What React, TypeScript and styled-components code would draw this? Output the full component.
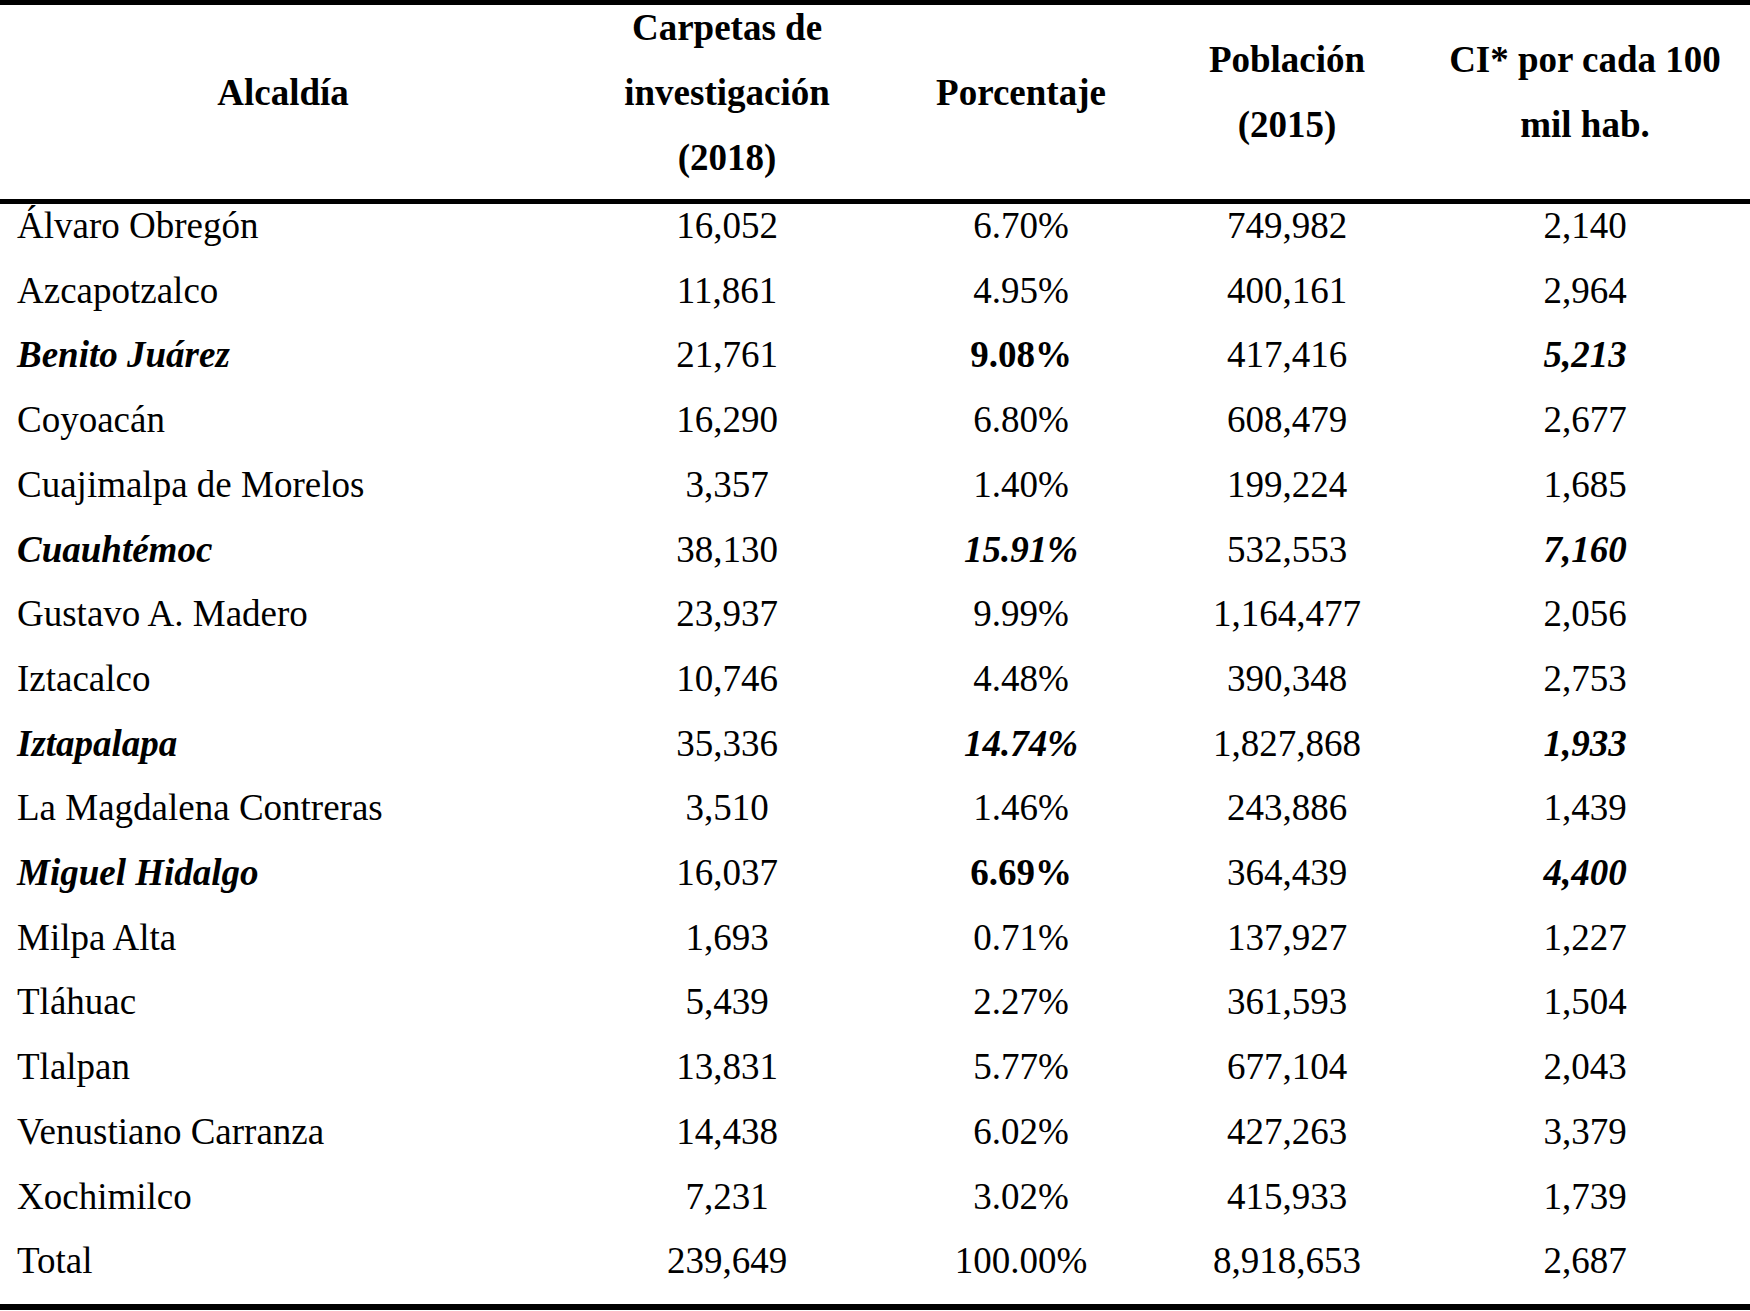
import { FunctionComponent } from "react";
import styled, { createGlobalStyle } from "styled-components";

type Emphasis = "plain" | "bold" | "boldItalic";

type RowData = {
  name: string;
  carpetas: string;
  pct: string;
  poblacion: string;
  ci: string;
  nameEm?: Emphasis;
  pctEm?: Emphasis;
  ciEm?: Emphasis;
};

const rows: RowData[] = [
  { name: "Álvaro Obregón", carpetas: "16,052", pct: "6.70%", poblacion: "749,982", ci: "2,140" },
  { name: "Azcapotzalco", carpetas: "11,861", pct: "4.95%", poblacion: "400,161", ci: "2,964" },
  { name: "Benito Juárez", carpetas: "21,761", pct: "9.08%", poblacion: "417,416", ci: "5,213", nameEm: "boldItalic", pctEm: "bold", ciEm: "boldItalic" },
  { name: "Coyoacán", carpetas: "16,290", pct: "6.80%", poblacion: "608,479", ci: "2,677" },
  { name: "Cuajimalpa de Morelos", carpetas: "3,357", pct: "1.40%", poblacion: "199,224", ci: "1,685" },
  { name: "Cuauhtémoc", carpetas: "38,130", pct: "15.91%", poblacion: "532,553", ci: "7,160", nameEm: "boldItalic", pctEm: "boldItalic", ciEm: "boldItalic" },
  { name: "Gustavo A. Madero", carpetas: "23,937", pct: "9.99%", poblacion: "1,164,477", ci: "2,056" },
  { name: "Iztacalco", carpetas: "10,746", pct: "4.48%", poblacion: "390,348", ci: "2,753" },
  { name: "Iztapalapa", carpetas: "35,336", pct: "14.74%", poblacion: "1,827,868", ci: "1,933", nameEm: "boldItalic", pctEm: "boldItalic", ciEm: "boldItalic" },
  { name: "La Magdalena Contreras", carpetas: "3,510", pct: "1.46%", poblacion: "243,886", ci: "1,439" },
  { name: "Miguel Hidalgo", carpetas: "16,037", pct: "6.69%", poblacion: "364,439", ci: "4,400", nameEm: "boldItalic", pctEm: "bold", ciEm: "boldItalic" },
  { name: "Milpa Alta", carpetas: "1,693", pct: "0.71%", poblacion: "137,927", ci: "1,227" },
  { name: "Tláhuac", carpetas: "5,439", pct: "2.27%", poblacion: "361,593", ci: "1,504" },
  { name: "Tlalpan", carpetas: "13,831", pct: "5.77%", poblacion: "677,104", ci: "2,043" },
  { name: "Venustiano Carranza", carpetas: "14,438", pct: "6.02%", poblacion: "427,263", ci: "3,379" },
  { name: "Xochimilco", carpetas: "7,231", pct: "3.02%", poblacion: "415,933", ci: "1,739" },
  { name: "Total", carpetas: "239,649", pct: "100.00%", poblacion: "8,918,653", ci: "2,687" },
];

const GlobalStyle = createGlobalStyle`
  html, body {
    margin: 0;
    padding: 0;
    background: #ffffff;
  }
  body {
    font-family: "Liberation Serif", "Times New Roman", serif;
    color: #000000;
  }
`;

const COLUMNS = "566px 322px 266px 266px 330px";

const Table = styled.div`
  width: 1750px;
  border-top: 5px solid #000;
  border-bottom: 6px solid #000;
  font-size: 37px;
`;

const HeaderRow = styled.div`
  display: grid;
  grid-template-columns: ${COLUMNS};
  height: 199px;
  border-bottom: 5px solid #000;
  box-sizing: border-box;
`;

const HeaderCell = styled.div`
  display: flex;
  align-items: center;
  justify-content: center;
  text-align: center;
  font-weight: 700;
  line-height: 65px;
  padding-bottom: 20px;
  box-sizing: border-box;
  height: 194px;
`;

const Body = styled.div`
  display: grid;
  grid-template-rows: repeat(17, minmax(0, 1fr));
  height: 1100px;
`;

const Row = styled.div`
  display: grid;
  grid-template-columns: ${COLUMNS};
  min-height: 0;
`;

const Cell = styled.div<{ $left?: boolean; $em?: Emphasis }>`
  display: flex;
  align-items: flex-start;
  justify-content: ${(p) => (p.$left ? "flex-start" : "center")};
  padding-left: ${(p) => (p.$left ? "17px" : "0")};
  line-height: 43px;
  white-space: nowrap;
  font-weight: ${(p) => (p.$em && p.$em !== "plain" ? 700 : 400)};
  font-style: ${(p) => (p.$em === "boldItalic" ? "italic" : "normal")};
`;

const App: FunctionComponent = () => {
  return (
    <>
      <GlobalStyle />
      <Table>
        <HeaderRow>
          <HeaderCell>Alcaldía</HeaderCell>
          <HeaderCell>
            Carpetas de
            <br />
            investigación
            <br />
            (2018)
          </HeaderCell>
          <HeaderCell>Porcentaje</HeaderCell>
          <HeaderCell>
            Población
            <br />
            (2015)
          </HeaderCell>
          <HeaderCell>
            CI* por cada 100
            <br />
            mil hab.
          </HeaderCell>
        </HeaderRow>
        <Body>
          {rows.map((r) => (
            <Row key={r.name}>
              <Cell $left $em={r.nameEm}>{r.name}</Cell>
              <Cell>{r.carpetas}</Cell>
              <Cell $em={r.pctEm}>{r.pct}</Cell>
              <Cell>{r.poblacion}</Cell>
              <Cell $em={r.ciEm}>{r.ci}</Cell>
            </Row>
          ))}
        </Body>
      </Table>
    </>
  );
};

export default App;
